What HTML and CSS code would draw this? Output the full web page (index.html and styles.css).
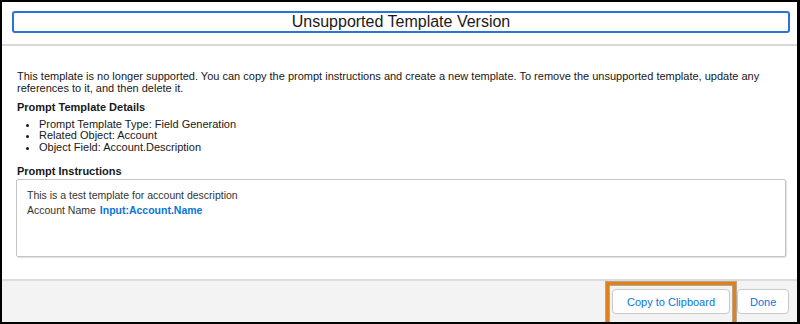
FILE: index.html
```html
<!DOCTYPE html>
<html lang="en">
<head>
<meta charset="utf-8">
<title>Unsupported Template Version</title>
<link rel="stylesheet" href="styles.css">
</head>
<body>
<div class="modal">
  <header class="modal-header">
    <div class="title-box"><h1 class="title">Unsupported Template Version</h1></div>
  </header>
  <main class="modal-body">
    <p class="intro">This template is no longer supported. You can copy the prompt instructions and create a new template. To remove the unsupported template, update any references to it, and then delete it.</p>
    <h2 class="section-title">Prompt Template Details</h2>
    <ul class="details">
      <li>Prompt Template Type: Field Generation</li>
      <li>Related Object: Account</li>
      <li>Object Field: Account.Description</li>
    </ul>
    <h2 class="section-title label">Prompt Instructions</h2>
    <div class="instructions">
      <div>This is a test template for account description</div>
      <div>Account Name <span class="merge">Input:Account.Name</span></div>
    </div>
  </main>
  <footer class="modal-footer">
    <span class="highlight"><button class="btn btn-copy">Copy to Clipboard</button></span>
    <button class="btn btn-done">Done</button>
  </footer>
</div>
</body>
</html>
```
FILE: styles.css
```css
html, body {
  margin: 0;
  padding: 0;
  background: #ffffff;
}
body {
  font-family: "Liberation Sans", Arial, Helvetica, sans-serif;
  color: #181818;
}
.modal {
  box-sizing: border-box;
  width: 800px;
  height: 324px;
  border: 2px solid #000000;
  border-right-width: 3px;
  display: flex;
  flex-direction: column;
  overflow: hidden;
}
.modal-header {
  box-sizing: border-box;
  height: 44px;
  padding: 9px 7px 0 10px;
  border-bottom: 2px solid #d9d9d9;
  flex: none;
}
.title-box {
  box-sizing: border-box;
  height: 22px;
  border: 2px solid #2a74d6;
  border-radius: 3px;
  display: flex;
  align-items: center;
  justify-content: center;
}
.title {
  margin: 0;
  font-size: 16px;
  font-weight: 400;
  line-height: 18px;
  color: #1a1a1a;
}
.modal-body {
  flex: 1;
  padding: 25px 11px 0 15px;
  font-size: 11px;
  line-height: 11.5px;
}
.intro {
  margin: 0;
}
.section-title {
  margin: 8px 0 0 0;
  font-size: 11px;
  font-weight: 700;
  line-height: 11.5px;
}
.details {
  margin: 5px 0 0 0;
  padding-left: 22px;
  list-style: disc;
  line-height: 11.8px;
}
.section-title.label {
  margin-top: 12px;
}
.instructions {
  box-sizing: border-box;
  margin: 1.5px 0 0 -1px;
  height: 78px;
  border: 1px solid #c4c4c4;
  border-radius: 2px;
  box-shadow: 1px 1px 1px rgba(0, 0, 0, 0.12);
  padding: 8px 10px 0 10px;
  font-size: 10.5px;
  line-height: 15px;
  color: #333333;
}
.merge {
  color: #0b74d8;
  font-weight: 700;
  margin-left: 1px;
}
.modal-footer {
  box-sizing: border-box;
  flex: none;
  height: 43px;
  border-top: 2px solid #dcdcdc;
  background: #f3f3f3;
  display: flex;
  justify-content: flex-end;
  align-items: flex-start;
  padding: 8px 8px 0 0;
  gap: 7px;
}
.highlight {
  position: relative;
  display: inline-flex;
}
.highlight::after {
  content: "";
  position: absolute;
  top: -7px;
  left: -6px;
  right: -6px;
  bottom: -12px;
  border: 3px solid #e0821a;
  box-shadow: 0 0 0 1px rgba(110, 70, 20, 0.45), inset 0 0 0 1px rgba(110, 70, 20, 0.45);
  pointer-events: none;
}
.btn {
  box-sizing: border-box;
  height: 25px;
  background: #ffffff;
  border: 1px solid #c9c9c9;
  border-radius: 4px;
  font-family: "Liberation Sans", Arial, Helvetica, sans-serif;
  font-size: 11px;
  color: #0b74d8;
  padding: 0 12px;
  margin: 0;
}
.btn-copy {
  width: 118px;
}
.btn-done {
  width: 52px;
}
```
